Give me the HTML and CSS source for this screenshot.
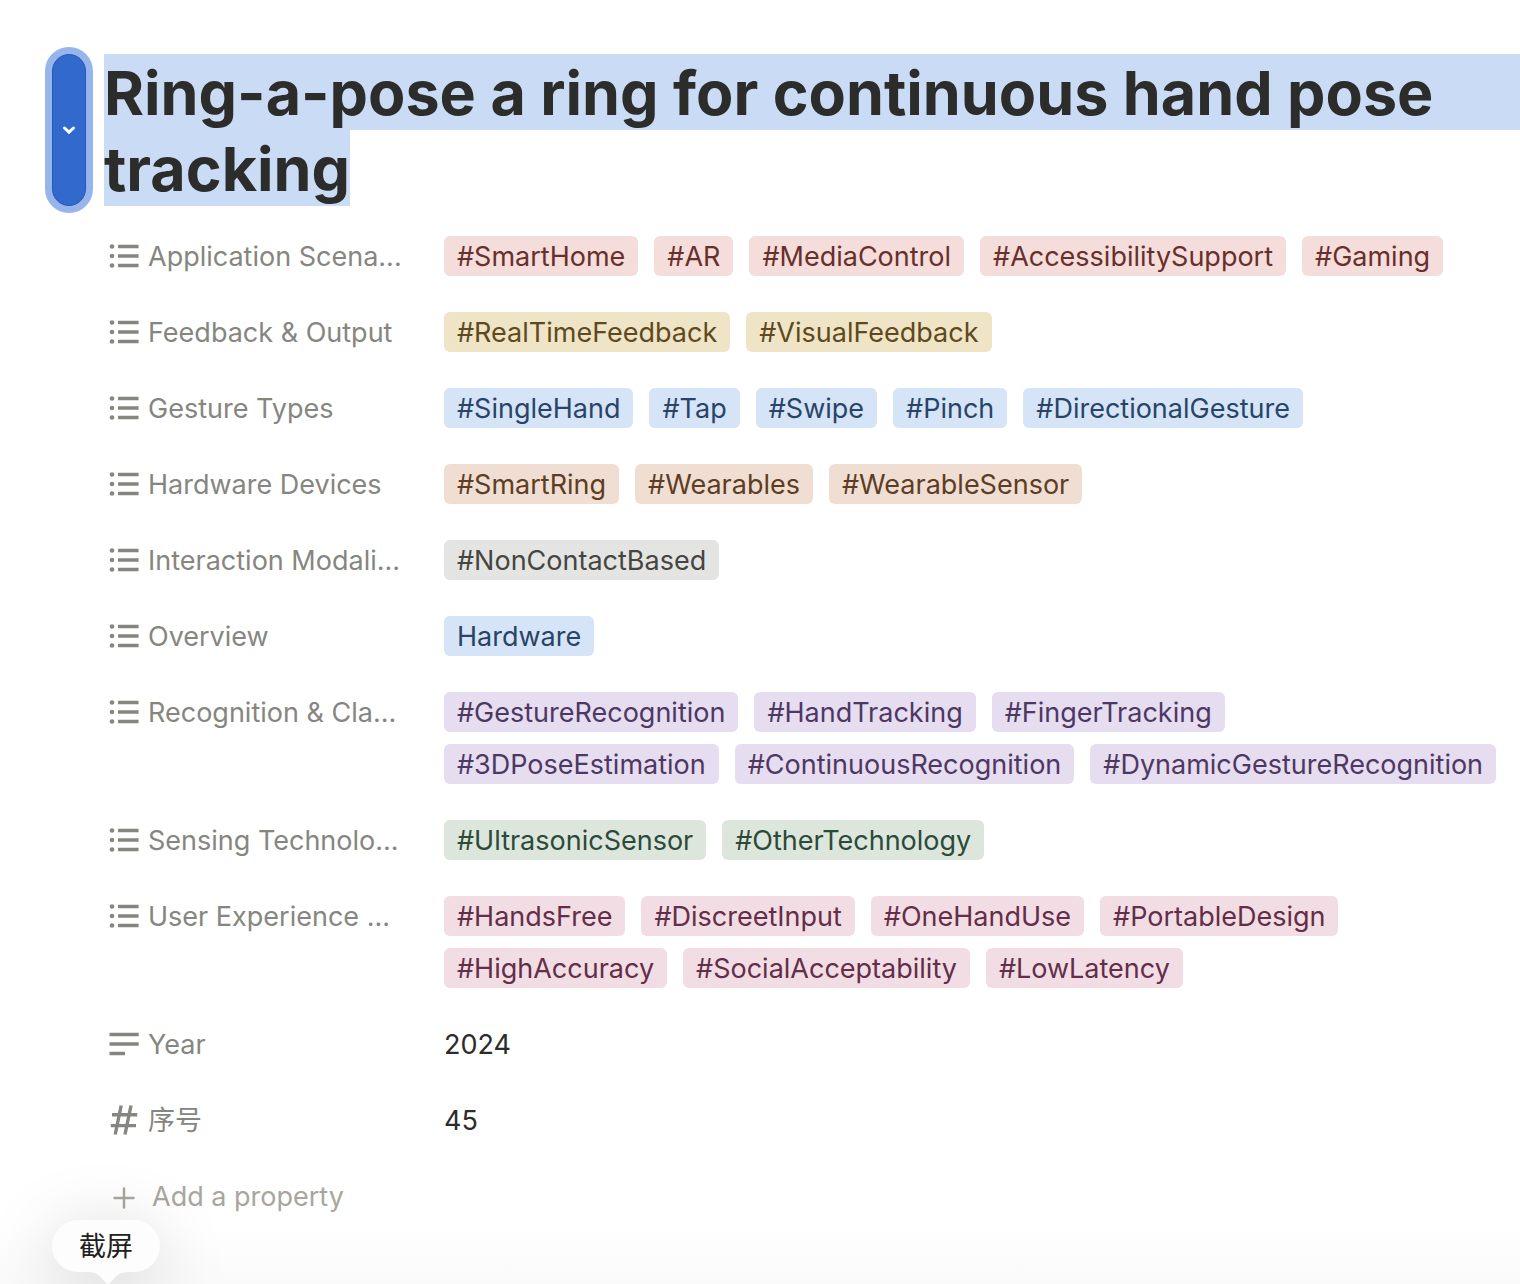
FILE: index.html
```html
<!DOCTYPE html>
<html lang="en">
<head>
<meta charset="utf-8">
<meta name="viewport" content="width=device-width, initial-scale=1">
<title>Ring-a-pose</title>
<link rel="stylesheet" href="styles.css">
</head>
<body>
<svg class="sprite" aria-hidden="true">
  <symbol id="icon-list" viewBox="0 0 32 32"><circle cx="4" cy="6.500" r="2.300"/><circle cx="4" cy="16" r="2.300"/><circle cx="4" cy="25.500" r="2.300"/><path d="M10 4.800h20.600v3.400H10zM10 14.300h20.600v3.400H10zM10 23.800h20.600v3.400H10z"/></symbol>
  <symbol id="icon-text" viewBox="0 0 32 32"><path d="M1.500 4.800h29.200v3.400H1.500zM1.500 14.300h29.200v3.400H1.500zM1.500 23.800h15.500v3.400H1.500z"/></symbol>
  <symbol id="icon-number" viewBox="0 0 32 32"><path d="M13.200 1.500 7.200 30.500M23 1.500l-6 29M4 10.800h25.200M2.800 21.600H28" fill="none" stroke="currentColor" stroke-width="3.400"/></symbol>
  <symbol id="icon-plus" viewBox="0 0 32 32"><path d="M16 8.500v19M6.500 18h19" fill="none" stroke="currentColor" stroke-width="2.400" stroke-linecap="round"/></symbol>
</svg>
<main class="page">
  <header class="title-bar">
    <button class="handle" type="button" aria-label="Title options">
      <svg class="handle-icon" viewBox="0 0 14 10" aria-hidden="true"><path d="M2.500 3 7 7.200 11.500 3" fill="none" stroke="currentColor" stroke-width="3" stroke-linecap="round"/></svg>
    </button>
    <h1 class="title"><span class="line line-full">Ring-a-pose a ring for continuous hand pose </span><span class="line">tracking</span></h1>
  </header>

  <dl class="properties">
    <div class="property">
      <dt class="label"><svg class="icon" aria-hidden="true"><use href="#icon-list"/></svg><span class="name">Application Scena...</span></dt>
      <dd class="value red"><span class="tag">#SmartHome</span><span class="tag">#AR</span><span class="tag">#MediaControl</span><span class="tag">#AccessibilitySupport</span><span class="tag">#Gaming</span></dd>
    </div>
    <div class="property">
      <dt class="label"><svg class="icon" aria-hidden="true"><use href="#icon-list"/></svg><span class="name">Feedback &amp; Output</span></dt>
      <dd class="value yellow"><span class="tag">#RealTimeFeedback</span><span class="tag">#VisualFeedback</span></dd>
    </div>
    <div class="property">
      <dt class="label"><svg class="icon" aria-hidden="true"><use href="#icon-list"/></svg><span class="name">Gesture Types</span></dt>
      <dd class="value blue"><span class="tag">#SingleHand</span><span class="tag">#Tap</span><span class="tag">#Swipe</span><span class="tag">#Pinch</span><span class="tag">#DirectionalGesture</span></dd>
    </div>
    <div class="property">
      <dt class="label"><svg class="icon" aria-hidden="true"><use href="#icon-list"/></svg><span class="name">Hardware Devices</span></dt>
      <dd class="value brown"><span class="tag">#SmartRing</span><span class="tag">#Wearables</span><span class="tag">#WearableSensor</span></dd>
    </div>
    <div class="property">
      <dt class="label"><svg class="icon" aria-hidden="true"><use href="#icon-list"/></svg><span class="name">Interaction Modali...</span></dt>
      <dd class="value gray"><span class="tag">#NonContactBased</span></dd>
    </div>
    <div class="property">
      <dt class="label"><svg class="icon" aria-hidden="true"><use href="#icon-list"/></svg><span class="name">Overview</span></dt>
      <dd class="value blue"><span class="tag">Hardware</span></dd>
    </div>
    <div class="property">
      <dt class="label"><svg class="icon" aria-hidden="true"><use href="#icon-list"/></svg><span class="name">Recognition &amp; Cla...</span></dt>
      <dd class="value purple"><span class="tag">#GestureRecognition</span><span class="tag">#HandTracking</span><span class="tag">#FingerTracking</span><span class="tag">#3DPoseEstimation</span><span class="tag">#ContinuousRecognition</span><span class="tag">#DynamicGestureRecognition</span></dd>
    </div>
    <div class="property">
      <dt class="label"><svg class="icon" aria-hidden="true"><use href="#icon-list"/></svg><span class="name">Sensing Technolo...</span></dt>
      <dd class="value green"><span class="tag">#UltrasonicSensor</span><span class="tag">#OtherTechnology</span></dd>
    </div>
    <div class="property">
      <dt class="label"><svg class="icon" aria-hidden="true"><use href="#icon-list"/></svg><span class="name">User Experience ...</span></dt>
      <dd class="value pink"><span class="tag">#HandsFree</span><span class="tag">#DiscreetInput</span><span class="tag">#OneHandUse</span><span class="tag">#PortableDesign</span><span class="tag">#HighAccuracy</span><span class="tag">#SocialAcceptability</span><span class="tag">#LowLatency</span></dd>
    </div>
    <div class="property">
      <dt class="label"><svg class="icon" aria-hidden="true"><use href="#icon-text"/></svg><span class="name">Year</span></dt>
      <dd class="value"><span class="plain">2024</span></dd>
    </div>
    <div class="property">
      <dt class="label"><svg class="icon" aria-hidden="true"><use href="#icon-number"/></svg><span class="name">序号</span></dt>
      <dd class="value"><span class="plain">45</span></dd>
    </div>
  </dl>
  <button class="add" type="button"><svg class="icon" aria-hidden="true"><use href="#icon-plus"/></svg><span class="name">Add a property</span></button>

  <div class="tooltip" role="tooltip">截屏<svg class="tail" viewBox="0 0 40 13" aria-hidden="true"><path d="M0 0C9 0 12 4 17 10q3 4 6 0C28 4 31 0 40 0z"/></svg></div>
</main>
</body>
</html>
```
FILE: styles.css
```css
* {
  box-sizing: border-box;
}

body {
  margin: 0;
  background: #fff;
  color: #2c2c2a;
  font: 27px/42px Inter, "Noto Sans CJK SC", sans-serif;
}

button {
  border: 0;
  font: inherit;
}

.sprite {
  display: none;
}

.page {
  position: relative;
  min-height: 100vh;
  padding-top: 54px;
  overflow: hidden;
  background: linear-gradient(to top, #fafafa, #fff 60px);
}

.title-bar {
  display: flex;
  gap: 18px;
  padding-left: 52px;
}

.handle {
  display: flex;
  flex: none;
  align-items: center;
  justify-content: center;
  width: 34px;
  padding: 0;
  border: 1px solid #2659b4;
  border-radius: 17px;
  background: #3169cd;
  color: #fff;
  box-shadow: 0 0 0 7px #97b5eb;
}

.handle-icon {
  width: 14px;
  height: 10px;
}

.title {
  display: flex;
  flex: 1;
  flex-direction: column;
  align-items: flex-start;
  margin: 0;
  font-size: 61px;
  font-weight: 700;
  line-height: 78px;
}

.line {
  height: 76px;
  background: #cadbf5;
}

.line-full {
  align-self: stretch;
  white-space: nowrap;
}

.properties {
  display: flex;
  flex-direction: column;
  gap: 8px;
  margin: 0;
  padding: 16px 16px 8px 108px;
}

.property {
  display: grid;
  grid-template-columns: 336px 1fr;
  padding: 14px 0;
}

.label,
.add {
  display: flex;
  align-items: center;
  gap: 8px;
  height: 40px;
  color: #868680;
  white-space: nowrap;
}

.icon {
  flex: none;
  width: 32px;
  height: 32px;
  fill: currentColor;
}

.value {
  display: flex;
  flex-wrap: wrap;
  gap: 12px 16px;
  margin: 0;
}

.name,
.tag,
.plain {
  height: 40px;
  white-space: nowrap;
}

.tag {
  padding: 0 13px;
  border-radius: 6px;
}

.red .tag { background: #f4dddb; color: #682f2c; }
.yellow .tag { background: #efe4c5; color: #5e4a20; }
.blue .tag { background: #d5e4f7; color: #294467; }
.brown .tag { background: #f0ded2; color: #5d3d24; }
.gray .tag { background: #e4e4e2; color: #454542; }
.purple .tag { background: #e6ddf0; color: #4d3863; }
.green .tag { background: #dde6dd; color: #2d4a39; }
.pink .tag { background: #f2dde4; color: #622e48; }

.add {
  gap: 12px;
  margin: 14px 0 14px 108px;
  padding: 0;
  background: none;
  color: #a8a69d;
}

.tooltip {
  position: absolute;
  bottom: 12px;
  left: 52px;
  padding: 6px 27px 4px;
  border-radius: 26px;
  background: #fdfdfd;
  color: #202020;
  box-shadow: 0 12px 72px rgba(0, 0, 0, 0.18);
}

.tail {
  position: absolute;
  top: 100%;
  left: 36px;
  width: 40px;
  height: 13px;
  fill: #fdfdfd;
}
```
